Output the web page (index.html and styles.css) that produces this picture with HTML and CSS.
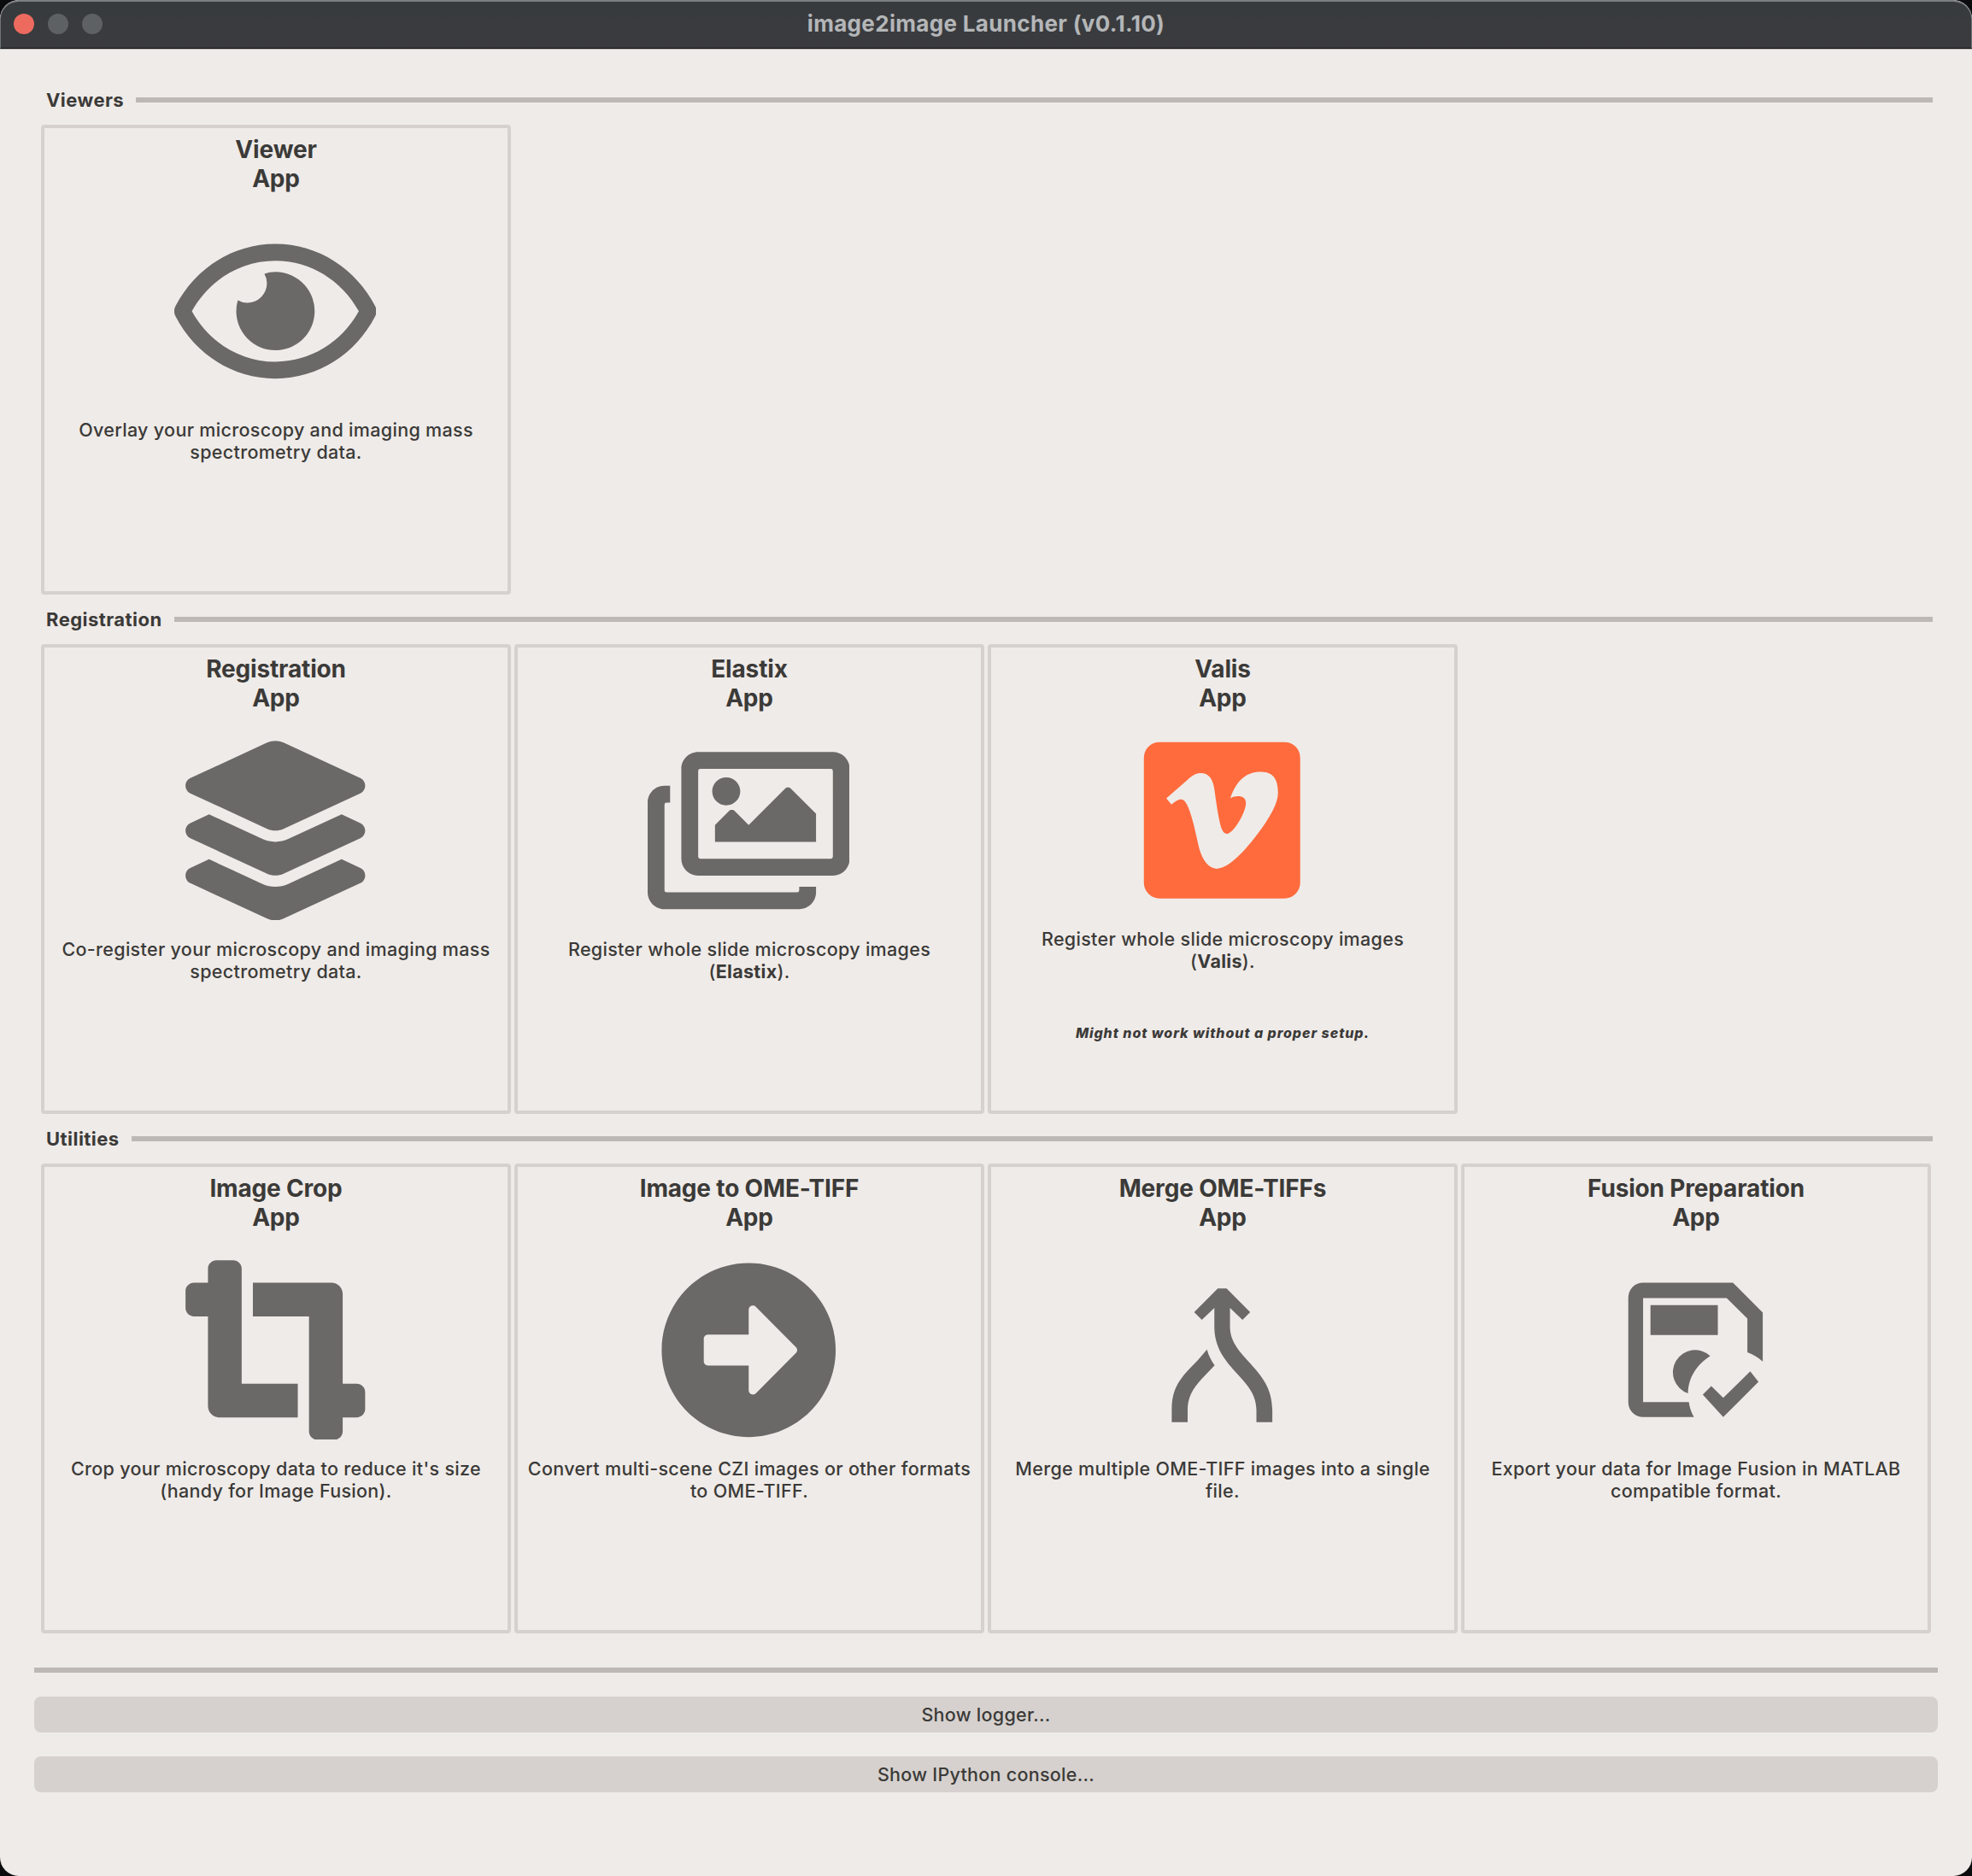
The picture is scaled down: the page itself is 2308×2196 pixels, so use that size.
FILE: index.html
```
<!DOCTYPE html>
<html lang="en">
<head>
<meta charset="utf-8">
<title>image2image Launcher</title>
<link rel="stylesheet" href="styles.css">
</head>
<body>
<div class="window">
  <header class="titlebar">
    <div class="lights"><span class="light close"></span><span class="light"></span><span class="light"></span></div>
    <h1 class="window-title">image2image Launcher (v0.1.10)</h1>
  </header>
  <main class="content">
    <section class="group">
      <h2 class="group-title">Viewers</h2>
      <div class="cards">
        <article class="card">
          <h3 class="card-title">Viewer<br>App</h3>
          <svg class="icon" viewBox="0 0 576 512"><path d="M288 144a110.94 110.94 0 0 0-31.24 5 55.4 55.4 0 0 1 7.24 27 56 56 0 0 1-56 56 55.4 55.4 0 0 1-27-7.24A111.71 111.71 0 1 0 288 144zm284.52 97.4C518.29 135.59 410.93 64 288 64S57.68 135.64 3.48 241.41a32.35 32.35 0 0 0 0 29.19C57.71 376.41 165.07 448 288 448s230.32-71.64 284.52-177.41a32.35 32.35 0 0 0 0-29.19zM288 400c-98.65 0-189.09-55-237.93-144C98.91 167 189.34 112 288 112s189.09 55 237.93 144C477.1 345 386.66 400 288 400z"/></svg>
          <p class="desc">Overlay your microscopy and imaging mass<br>spectrometry data.</p>
        </article>
      </div>
    </section>
    <section class="group">
      <h2 class="group-title">Registration</h2>
      <div class="cards">
        <article class="card">
          <h3 class="card-title">Registration<br>App</h3>
          <svg class="icon" viewBox="0 0 576 512"><path d="M264.5 5.2c14.9-6.9 32.1-6.9 47 0l218.6 101c8.5 3.9 13.9 12.4 13.9 21.8s-5.4 17.9-13.9 21.8l-218.6 101c-14.9 6.9-32.1 6.9-47 0L45.9 149.8C37.4 145.8 32 137.3 32 128s5.4-17.9 13.9-21.8L264.5 5.2zM476.9 209.6l53.2 24.6c8.5 3.9 13.9 12.4 13.9 21.8s-5.4 17.9-13.9 21.8l-218.6 101c-14.9 6.9-32.1 6.9-47 0L45.9 277.8C37.4 273.8 32 265.3 32 256s5.4-17.9 13.9-21.8l53.2-24.6 152 70.2c23.4 10.8 50.4 10.8 73.8 0l152-70.2zm-152 198.2l152-70.2 53.2 24.6c8.5 3.9 13.9 12.4 13.9 21.8s-5.4 17.9-13.9 21.8l-218.6 101c-14.9 6.9-32.1 6.9-47 0L45.9 405.8C37.4 401.8 32 393.3 32 384s5.4-17.9 13.9-21.8l53.2-24.6 152 70.2c23.4 10.8 50.4 10.8 73.8 0z"/></svg>
          <p class="desc">Co-register your microscopy and imaging mass<br>spectrometry data.</p>
        </article>
        <article class="card">
          <h3 class="card-title">Elastix<br>App</h3>
          <svg class="icon" viewBox="0 0 576 512"><path d="M480 416v16c0 26.51-21.49 48-48 48H48c-26.51 0-48-21.49-48-48V176c0-26.51 21.49-48 48-48h16v48H54a6 6 0 0 0-6 6v244a6 6 0 0 0 6 6h372a6 6 0 0 0 6-6v-10h48zm42-336H150a6 6 0 0 0-6 6v244a6 6 0 0 0 6 6h372a6 6 0 0 0 6-6V86a6 6 0 0 0-6-6zm6-48c26.51 0 48 21.49 48 48v256c0 26.51-21.49 48-48 48H144c-26.51 0-48-21.49-48-48V80c0-26.51 21.49-48 48-48h384zM264 144c0 22.091-17.909 40-40 40s-40-17.909-40-40 17.909-40 40-40 40 17.909 40 40zm-72 96l39.515-39.515c4.686-4.686 12.284-4.686 16.971 0L288 240l103.515-103.515c4.686-4.686 12.284-4.686 16.971 0L480 208v80H192v-48z"/></svg>
          <p class="desc">Register whole slide microscopy images<br>(<b>Elastix</b>).</p>
        </article>
        <article class="card card-noted">
          <h3 class="card-title">Valis<br>App</h3>
          <svg class="icon icon-accent" viewBox="4.5 44 711 632"><path fill-rule="evenodd" d="M140 84.5h440a55 55 0 0 1 55 55v440a55 55 0 0 1-55 55H140a55 55 0 0 1-55-55v-440a55 55 0 0 1 55-55zM164 282l74-64C256 202 268 194 286 194C314 194 328 216 333 250C340 300 347 352 357 385C364 403 371 407 379 407C398 407 443 336 444 300C445 272 412 270 389 282C410 218 448 187 499 189C542 190 557 218 557 262C557 300 530 348 482 412C430 480 380 530 341 530C314 530 291 500 280 460C268 410 262 375 247 330C233 287 222 285 212 286C203 287 194 295 182 304z"/></svg>
          <p class="desc">Register whole slide microscopy images<br>(<b>Valis</b>).</p>
          <p class="note">Might not work without a proper setup.</p>
        </article>
      </div>
    </section>
    <section class="group">
      <h2 class="group-title">Utilities</h2>
      <div class="cards">
        <article class="card">
          <h3 class="card-title">Image Crop<br>App</h3>
          <svg class="icon" viewBox="-32 0 576 512"><path d="M488 352h-40V96c0-17.67-14.33-32-32-32H192v96h160v328c0 13.25 10.75 24 24 24h48c13.25 0 24-10.75 24-24v-40h40c13.25 0 24-10.75 24-24v-48c0-13.26-10.75-24-24-24zM160 24c0-13.26-10.75-24-24-24H88C74.75 0 64 10.74 64 24v40H24C10.75 64 0 74.74 0 88v48c0 13.25 10.75 24 24 24h40v256c0 17.67 14.33 32 32 32h224v-96H160V24z"/></svg>
          <p class="desc">Crop your microscopy data to reduce it's size<br>(handy for Image Fusion).</p>
        </article>
        <article class="card">
          <h3 class="card-title">Image to OME-TIFF<br>App</h3>
          <svg class="icon" viewBox="-32 0 576 512"><path d="M256 8c137 0 248 111 248 248S393 504 256 504 8 393 8 256 119 8 256 8zM140 300h116v70.9c0 10.7 13 16.1 20.5 8.5l114.3-114.9c4.7-4.7 4.7-12.2 0-16.9l-114.3-115c-7.6-7.6-20.5-2.2-20.5 8.5V212H140c-6.6 0-12 5.4-12 12v64c0 6.6 5.4 12 12 12z"/></svg>
          <p class="desc">Convert multi-scene CZI images or other formats<br>to OME-TIFF.</p>
        </article>
        <article class="card">
          <h3 class="card-title">Merge OME-TIFFs<br>App</h3>
          <svg class="icon" viewBox="-85.5 -16 711 632"><path d="M255 83h31l83 84-27 27-44-42v66c0 110 149 146 149 292v44h-56v-44c0-113-148-146-148-292v-66l-44 42-27-27zM217 298q8 29 27 56l-46 48c-33 36-49 67-49 108v44H93v-44c0-50 12-84 43-122q11-14 46-49z"/></svg>
          <p class="desc">Merge multiple OME-TIFF images into a single<br>file.</p>
        </article>
        <article class="card">
          <h3 class="card-title">Fusion Preparation<br>App</h3>
          <svg class="icon" viewBox="-43.5 -16 711 632"><path fill-rule="evenodd" d="M128 63h316l105 105v172q-24-21-54-32V189l-73-72H128v366h161q4 29 18 53H128a52 52 0 0 1-52-52V115a52 52 0 0 1 52-52zM154 142h237v105H154zM364 321c-45 30-76 72-78 131a78 78 0 1 1 78-131zM368 427l42 41 95-93 29 37-124 124-72-79z"/></svg>
          <p class="desc">Export your data for Image Fusion in MATLAB<br>compatible format.</p>
        </article>
      </div>
    </section>
    <footer class="actions">
      <button class="action">Show logger...</button>
      <button class="action">Show IPython console...</button>
    </footer>
  </main>
</div>
</body>
</html>
```
FILE: styles.css
```
* {
  box-sizing: border-box;
}

body {
  margin: 0;
  background: #0b0c0e;
  color: #3b3a38;
  font-family: Inter, "Liberation Sans", sans-serif;
  font-size: 21.5px;
}

h1, h2, h3, p {
  margin: 0;
}

.window {
  display: flex;
  flex-direction: column;
  width: 2308px;
  height: 2196px;
  overflow: hidden;
  border-radius: 22px;
  background: #efebe8;
}

.titlebar {
  display: grid;
  grid-template-columns: 1fr auto 1fr;
  align-items: center;
  height: 57px;
  padding: 0 15px 2px;
  border: 1px solid #6f7376;
  border-top: 2px solid #7b7f82;
  border-bottom: 1px solid #0c0c0d;
  border-radius: 22px 22px 0 0;
  background: linear-gradient(#373b3e, #3b3b3e);
}

.lights {
  display: flex;
  gap: 16px;
}

.light {
  width: 24px;
  height: 24px;
  border-radius: 50%;
  background: #5e6164;
}

.close {
  background: #ed6a5e;
}

.window-title {
  color: #b4b6b8;
  font-size: 26px;
  font-weight: 700;
  line-height: 32px;
  letter-spacing: 0.33px;
}

.content {
  padding: 43px 40px 0;
  border-top: 1px solid #b9b6b4;
}

.group {
  padding: 0 6px 0 8px;
}

.group-title {
  display: flex;
  align-items: center;
  gap: 14px;
  height: 32px;
  padding-left: 6px;
  font-size: 22px;
  font-weight: 750;
  letter-spacing: 0.45px;
}

.group-title::after {
  content: "";
  flex: 1;
  height: 6px;
  background: #bdb8b5;
}

.cards {
  display: flex;
  gap: 4px;
  padding: 13px 0 13px;
}

.card {
  display: flex;
  flex-direction: column;
  align-items: center;
  width: 550px;
  height: 550px;
  padding-top: 8px;
  border: 4px solid #d6d1ce;
  border-radius: 4px;
  text-align: center;
}

.card-title {
  font-size: 28px;
  font-weight: 700;
  line-height: 34px;
  letter-spacing: -0.17px;
}

.icon {
  width: 236.5px;
  height: 210.67px;
  margin: 32.7px 2px 20.6px 0;
  fill: #6a6967;
}

.icon-accent {
  fill: #ff6b3d;
}

.card-noted .icon {
  margin-top: 20.7px;
}

.desc {
  font-weight: 450;
  line-height: 26px;
  letter-spacing: 0.32px;
}

.desc b {
  font-weight: 750;
}

.note {
  margin-top: 61px;
  font-size: 16px;
  font-style: italic;
  font-weight: 800;
  line-height: 20px;
  letter-spacing: 0.95px;
}

.actions {
  display: flex;
  flex-direction: column;
  gap: 28px;
  margin-top: 27px;
  padding-top: 28px;
  border-top: 6px solid #bdb8b5;
}

.action {
  height: 42px;
  padding: 0;
  border: 0;
  border-radius: 8px;
  background: #d6d1ce;
  color: inherit;
  font: 450 21.5px/42px Inter, "Liberation Sans", sans-serif;
  letter-spacing: 0.28px;
}
```
